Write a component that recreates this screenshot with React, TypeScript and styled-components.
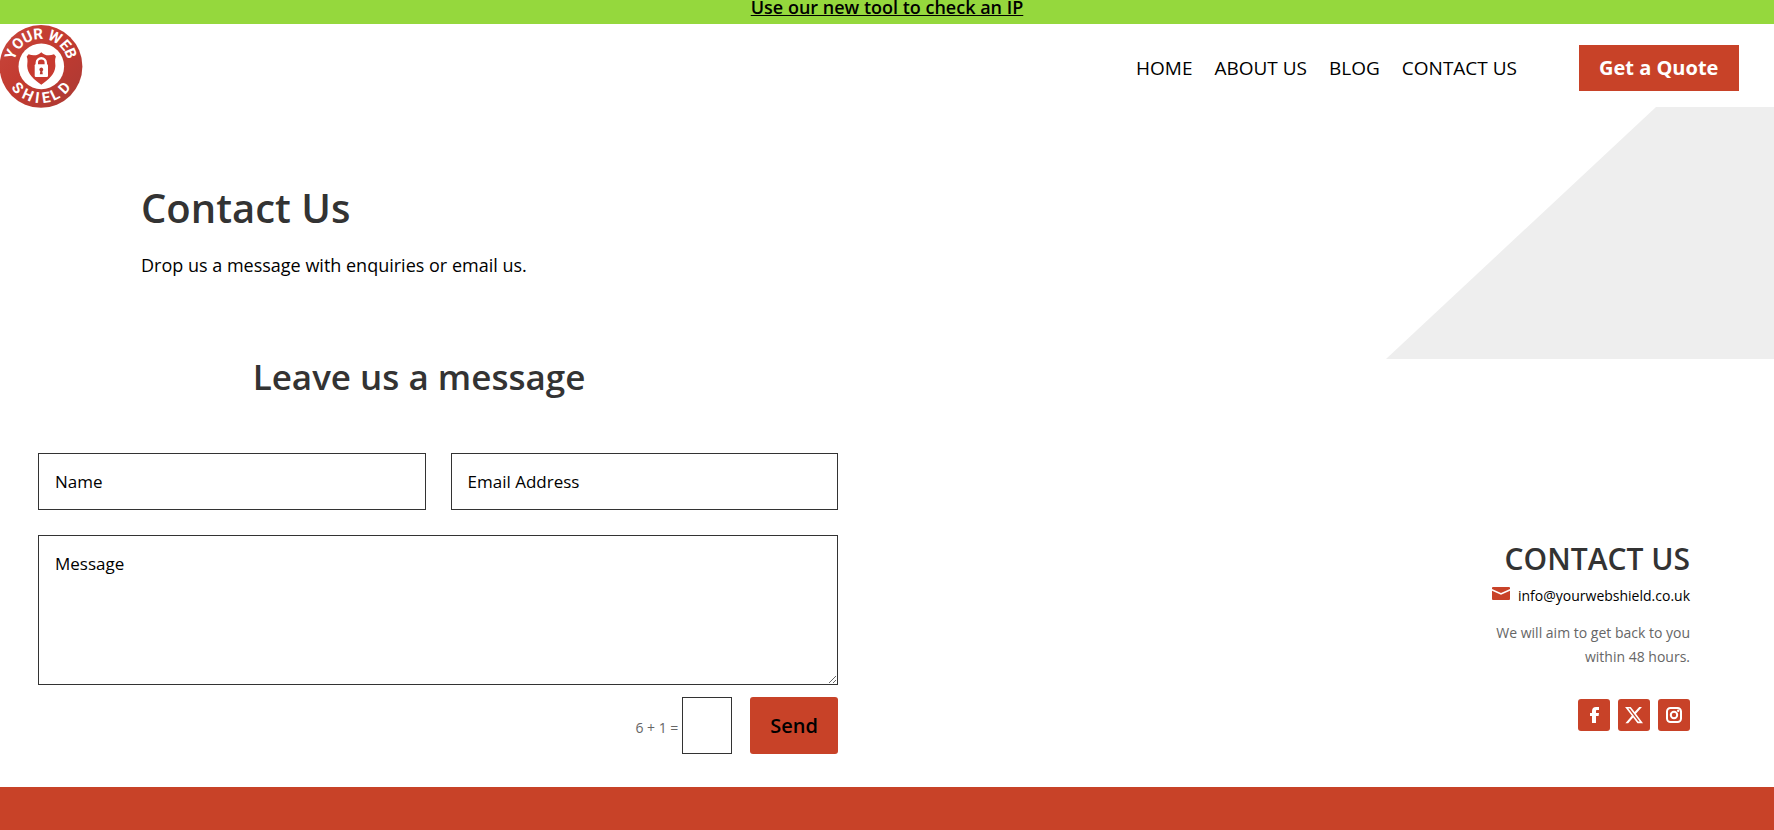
import React from "react";
import styled, { createGlobalStyle } from "styled-components";

const red = "#c84228";
const ink = "#333333";

const GlobalStyle = createGlobalStyle`
  *, *::before, *::after { box-sizing: border-box; }
  body {
    margin: 0;
    background: #fff;
    color: #000;
    font-family: "Open Sans", Arial, sans-serif;
    font-size: 14px;
    line-height: 24px;
  }
  h1, h2, h3, p { margin: 0; }
`;

const Page = styled.div`
  display: flex;
  flex-direction: column;
  min-height: 100vh;
`;

const Banner = styled.div`
  padding-bottom: 10px;
  background: #95d83d;
  text-align: center;
  font-size: 18px;
  line-height: 14px;
  font-weight: 600;
`;

const BannerLink = styled.a`
  color: #000;
`;

const Header = styled.header`
  display: flex;
  justify-content: space-between;
  align-items: flex-start;
  height: 83px;
  padding-right: 35px;
`;

const LogoLink = styled.a`
  display: block;
  svg { display: block; overflow: visible; }
`;

const HeaderEnd = styled.div`
  display: flex;
  align-items: center;
  gap: 62px;
  padding-top: 21px;
`;

const Nav = styled.nav`
  display: flex;
  gap: 22px;
`;

const NavLink = styled.a`
  color: #000;
  font-size: 19px;
  line-height: 46px;
  text-decoration: none;
`;

const QuoteLink = styled.a`
  min-width: 160px;
  padding: 0 20px;
  background: ${red};
  color: #fff;
  font-size: 20px;
  line-height: 46px;
  font-weight: 700;
  text-decoration: none;
`;

const Hero = styled.section`
  display: flex;
  justify-content: space-between;
`;

const HeroText = styled.div`
  padding: 81px 0 79px 141px;
`;

const HeroTitle = styled.h1`
  margin-bottom: 22px;
  color: ${ink};
  font-size: 40px;
  line-height: 40px;
  font-weight: 600;
`;

const HeroLead = styled.p`
  font-size: 18px;
  line-height: 30px;
`;

const HeroShape = styled.div`
  flex: 0 0 388px;
  background: #eeeeee;
  clip-path: polygon(270px 0, 100% 0, 100% 100%, 0 100%);
`;

const Columns = styled.main`
  display: flex;
  justify-content: space-between;
  align-items: flex-end;
`;

const FormColumn = styled.section`
  width: calc(50% - 49px);
  padding-bottom: 33px;
`;

const FormTitle = styled.h2`
  margin-bottom: 59px;
  color: ${ink};
  text-align: center;
  font-size: 35px;
  line-height: 35px;
  font-weight: 600;
`;

const Form = styled.form`
  display: grid;
  grid-template-columns: 1fr 1fr;
  column-gap: 25px;
  padding-left: 38px;
`;

const Field = styled.input`
  width: 100%;
  height: 57px;
  margin: 0;
  padding: 0 16px;
  border: 1px solid ${ink};
  border-radius: 0;
  background: #fff;
  color: #000;
  font: 17px "Open Sans", Arial, sans-serif;
  &::placeholder { color: #000; opacity: 1; }
`;

const MessageField = styled.textarea`
  grid-column: 1 / -1;
  display: block;
  width: 100%;
  height: 150px;
  margin: 25px 0 12px;
  padding: 16px;
  border: 1px solid ${ink};
  border-radius: 0;
  background: #fff;
  color: #000;
  font: 17px "Open Sans", Arial, sans-serif;
  resize: both;
  &::placeholder { color: #000; opacity: 1; }
`;

const FormEnd = styled.div`
  grid-column: 1 / -1;
  display: flex;
  justify-content: flex-end;
  align-items: center;
`;

const SumLabel = styled.label`
  margin-right: 4px;
  padding-top: 4px;
  color: #666;
`;

const SumField = styled(Field)`
  width: 50px;
  margin-right: 18px;
`;

const SendButton = styled.button`
  height: 57px;
  padding: 0 20px;
  border: 0;
  border-radius: 3px;
  background: ${red};
  color: #000;
  font: 600 20px "Open Sans", Arial, sans-serif;
`;

const ContactColumn = styled.aside`
  display: flex;
  flex-direction: column;
  align-items: flex-end;
  width: 220px;
  margin-right: 84px;
  padding-bottom: 56px;
  text-align: right;
`;

const ContactTitle = styled.h3`
  margin-bottom: 10px;
  color: ${ink};
  font-size: 30px;
  line-height: 30px;
  font-weight: 600;
  white-space: nowrap;
`;

const MailLink = styled.a`
  display: flex;
  gap: 8px;
  margin-bottom: 13px;
  color: #000;
  text-decoration: none;
  svg { margin-top: 3px; }
`;

const Note = styled.p`
  margin-bottom: 30px;
  color: #666;
`;

const Socials = styled.div`
  display: flex;
  gap: 8px;
`;

const SocialLink = styled.a`
  display: grid;
  place-items: center;
  width: 32px;
  height: 32px;
  border-radius: 3px;
  background: ${red};
`;

const Footer = styled.footer`
  flex: 1;
  min-height: 43px;
  background: ${red};
`;

type Glyph = { angle: number; advance: number };

/* Origin and rotation of each glyph of a word set round the badge.
   Angles run clockwise from 12 o'clock, or leftwards from 6 o'clock. */
function ring(glyphs: Glyph[], radius: number, below: boolean) {
  const cx = 41;
  const cy = 42;
  const placed = glyphs.map(({ angle, advance }) => {
    const a = (angle * Math.PI) / 180;
    const turn = below ? -angle : angle;
    const t = (turn * Math.PI) / 180;
    const dir = below ? 1 : -1;
    const x = cx + radius * Math.sin(a) - (advance / 2) * Math.cos(t);
    const y = cy + dir * radius * Math.cos(a) - (advance / 2) * Math.sin(t);
    return { x, y, turn };
  });
  return {
    x: placed.map((p) => p.x.toFixed(2)).join(" "),
    y: placed.map((p) => p.y.toFixed(2)).join(" "),
    rotate: placed.map((p) => p.turn).join(" "),
  };
}

const topWord = ring(
  [
    { angle: -68, advance: 10 },
    { angle: -46, advance: 10 },
    { angle: -25, advance: 10 },
    { angle: -5, advance: 10 },
    { angle: 8, advance: 3 },
    { angle: 26, advance: 13 },
    { angle: 49, advance: 8 },
    { angle: 67, advance: 10 },
  ],
  27,
  false
);

const bottomWord = ring(
  [
    { angle: -47, advance: 9 },
    { angle: -24, advance: 11 },
    { angle: -7, advance: 4 },
    { angle: 9, advance: 8 },
    { angle: 26, advance: 8 },
    { angle: 47, advance: 10 },
  ],
  37,
  true
);

const Logo = () => (
  <svg width="83" height="83" viewBox="0 0 83 83" role="img" aria-label="Your Web Shield">
    <defs>
      <linearGradient id="badge" x1="0" y1="0" x2="1" y2="1">
        <stop offset="0" stopColor="#c8473c" />
        <stop offset="0.5" stopColor="#c23a30" />
        <stop offset="1" stopColor="#a93a35" />
      </linearGradient>
    </defs>
    <circle cx="41" cy="42.4" r="41.4" fill="url(#badge)" />
    <circle cx="41.3" cy="42.4" r="22.8" fill="#fff" />
    <path
      d="M41.300 28.200C38.800 30.800 34 32.600 28.600 30.200L26.700 32.500C28.200 36 27.200 39 27.200 42C27.600 50.500 34 55.500 41.300 60.800C48.600 55.500 55 50.500 55.400 42C55.400 39 54.400 36 55.900 32.500L54 30.200C48.600 32.600 43.800 30.800 41.300 28.200Z"
      fill="#c83a30"
    />
    <path d="M36.800 41v-2.300a4.500 4.500 0 0 1 9 0V41" fill="none" stroke="#fff" strokeWidth="2.400" />
    <rect x="34.700" y="40.300" width="13.300" height="12.600" rx="1.200" fill="#fff" />
    <path d="M41.300 43.500a2 2 0 0 1 1 3.700l.5 3h-3l.5-3a2 2 0 0 1 1-3.700z" fill="#b8382f" />
    <g fill="#fff" fontFamily="Roboto, sans-serif" fontWeight="700" fontSize="15">
      <text {...topWord}>YOUR WEB</text>
      <text {...bottomWord}>SHIELD</text>
    </g>
  </svg>
);

const MailIcon = () => (
  <svg width="18" height="13" viewBox="0 0 18 13" fill={red} aria-hidden="true">
    <path d="M1 0h16a1 1 0 0 1 1 1v1L9 6 0 2V1a1 1 0 0 1 1-1z" />
    <path d="M0 3.800l9 4 9-4V12a1 1 0 0 1-1 1H1a1 1 0 0 1-1-1z" />
  </svg>
);

const FacebookIcon = () => (
  <svg width="16" height="16" viewBox="0 0 16 16" fill="#fff" aria-hidden="true">
    <path d="M6 16V9H4V6h2V4.200C6 1.500 7.400 0 10 0h3v3h-2c-.8 0-1 .4-1 1.200V6h3l-.4 3H10v7z" />
  </svg>
);

const XIcon = () => (
  <svg width="20" height="20" viewBox="0 0 24 24" fill="#fff" aria-hidden="true">
    <path d="M18.244 2.250h3.308l-7.227 8.260 8.502 11.240H16.170l-5.214-6.817L4.990 21.750H1.680l7.730-8.835L1.254 2.250H8.080l4.713 6.231zm-1.161 17.520h1.833L7.084 4.126H5.117z" />
  </svg>
);

const InstagramIcon = () => (
  <svg width="16" height="16" viewBox="0 0 16 16" fill="none" stroke="#fff" strokeWidth="2" aria-hidden="true">
    <rect x="1" y="1" width="14" height="14" rx="3.500" />
    <circle cx="8" cy="8" r="3.200" />
    <circle cx="12.200" cy="3.800" r="1.200" fill="#fff" stroke="none" />
  </svg>
);

const links = ["HOME", "ABOUT US", "BLOG", "CONTACT US"];

const socials = [
  { name: "Facebook", Icon: FacebookIcon },
  { name: "X", Icon: XIcon },
  { name: "Instagram", Icon: InstagramIcon },
];

export default function App() {
  return (
    <>
      <GlobalStyle />
      <Page>
        <Banner>
          <BannerLink href="#check-ip">Use our new tool to check an IP</BannerLink>
        </Banner>
        <Header>
          <LogoLink href="#home">
            <Logo />
          </LogoLink>
          <HeaderEnd>
            <Nav>
              {links.map((label) => (
                <NavLink key={label} href="#">
                  {label}
                </NavLink>
              ))}
            </Nav>
            <QuoteLink href="#quote">Get a Quote</QuoteLink>
          </HeaderEnd>
        </Header>
        <Hero>
          <HeroText>
            <HeroTitle>Contact Us</HeroTitle>
            <HeroLead>Drop us a message with enquiries or email us.</HeroLead>
          </HeroText>
          <HeroShape />
        </Hero>
        <Columns>
          <FormColumn>
            <FormTitle>Leave us a message</FormTitle>
            <Form onSubmit={(e) => e.preventDefault()}>
              <Field type="text" placeholder="Name" aria-label="Name" />
              <Field type="email" placeholder="Email Address" aria-label="Email Address" />
              <MessageField placeholder="Message" aria-label="Message" />
              <FormEnd>
                <SumLabel htmlFor="sum">6 + 1 =</SumLabel>
                <SumField id="sum" type="text" />
                <SendButton type="submit">Send</SendButton>
              </FormEnd>
            </Form>
          </FormColumn>
          <ContactColumn>
            <ContactTitle>CONTACT US</ContactTitle>
            <MailLink href="mailto:info@yourwebshield.co.uk">
              <MailIcon />
              info@yourwebshield.co.uk
            </MailLink>
            <Note>We will aim to get back to you within 48 hours.</Note>
            <Socials>
              {socials.map(({ name, Icon }) => (
                <SocialLink key={name} href="#" aria-label={name}>
                  <Icon />
                </SocialLink>
              ))}
            </Socials>
          </ContactColumn>
        </Columns>
        <Footer />
      </Page>
    </>
  );
}
